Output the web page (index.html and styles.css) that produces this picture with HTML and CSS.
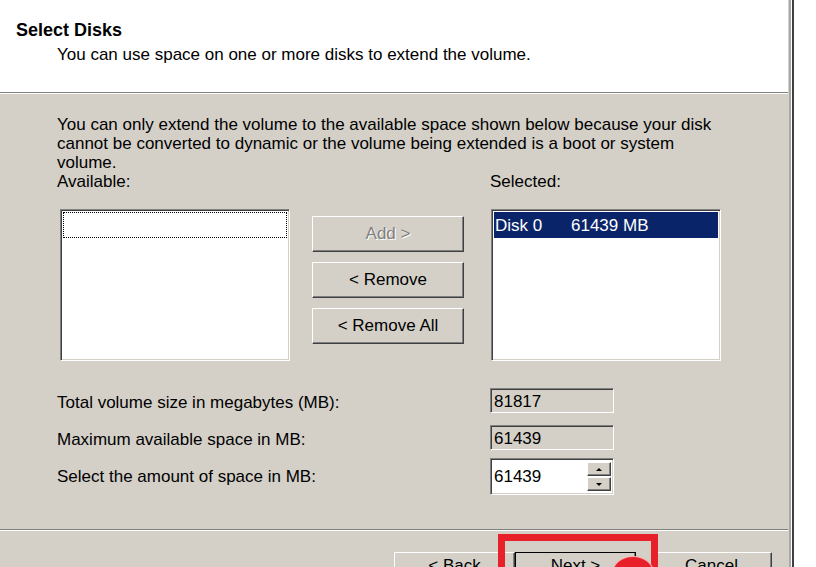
FILE: index.html
```html
<!DOCTYPE html>
<html lang="en">
<head>
  <meta charset="UTF-8">
  <meta name="viewport" content="width=device-width, initial-scale=1.0">
  <title>Extend Volume Wizard</title>
  <link rel="stylesheet" href="styles.css">
</head>
<body>
  <div class="wizard">
    <!-- Header -->
    <div class="header">
      <h1>Select Disks</h1>
      <p class="subtitle">You can use space on one or more disks to extend the volume.</p>
    </div>

    <!-- Page content -->
    <div class="content">
      <p class="note">You can only extend the volume to the available space shown below because your disk cannot be converted to dynamic or the volume being extended is a boot or system volume.</p>

      <div class="disk-picker">
        <label class="list-label">Available:</label>
        <span></span>
        <label class="list-label selected-label">Selected:</label>

        <div class="listbox available">
          <div class="focus-row"></div>
        </div>

        <div class="move-buttons">
          <button class="btn" disabled>Add &gt;</button>
          <button class="btn">&lt; Remove</button>
          <button class="btn">&lt; Remove All</button>
        </div>

        <div class="listbox selected">
          <div class="row-selected">
            <span class="disk-name">Disk 0</span>
            <span>61439 MB</span>
          </div>
        </div>
      </div>

      <div class="sizes">
        <label>Total volume size in megabytes (MB):</label>
        <div class="field readonly">81817</div>

        <label>Maximum available space in MB:</label>
        <div class="field readonly">61439</div>

        <label class="spin-label">Select the amount of space in MB:</label>
        <div class="field spin">
          <span class="spin-value">61439</span>
          <span class="spin-buttons">
            <span class="spin-btn"><span class="arrow-up"></span></span>
            <span class="spin-btn"><span class="arrow-down"></span></span>
          </span>
        </div>
      </div>
    </div>

    <!-- Footer buttons -->
    <div class="footer">
      <button class="btn nav">&lt; Back</button>
      <button class="btn nav default">Next &gt;</button>
      <button class="btn nav cancel">Cancel</button>
    </div>

    <!-- Annotation drawn over the screenshot -->
    <div class="mark-frame"></div>
    <div class="mark-blob"></div>
  </div>
</body>
</html>
```

FILE: styles.css
```css
/* Global Styles */
* {
  margin: 0;
  padding: 0;
  box-sizing: border-box;
}
body {
  font-family: 'Liberation Sans', Arial, sans-serif;
  font-size: 17px;
  line-height: 19px;
  color: #000;
  background: #fff;
}

/* Wizard frame */
.wizard {
  position: relative;
  width: 794px;
  height: 567px;
  overflow: hidden;
  display: flex;
  flex-direction: column;
  background: #d4d0c8;
  border-right: 2px solid #404040;
  box-shadow: inset -1px 0 #fff, inset -3px 0 #a8a8a8;
}

/* Header */
.header {
  height: 93px;
  background: #fff;
  border-bottom: 1px solid #808080;
  margin-right: 4px;
  padding: 21px 0 0 16px;
}
.header h1 {
  font-size: 18px;
  font-weight: bold;
  line-height: 19px;
}
.header .subtitle {
  margin-top: 5px;
  padding-left: 41px;
}

/* Content */
.content {
  flex: 1;
  border-top: 1px solid #fff;
  margin-right: 4px;
  padding: 21px 0 0 57px;
}
.note {
  width: 672px;
}
.disk-picker {
  display: grid;
  grid-template-columns: 233px 201px 230px;
  grid-template-rows: 19px 152px;
  row-gap: 18px;
}
.selected-label {
  margin-left: -1px;
}
.listbox {
  background: #fff;
  border: 1px solid;
  border-color: #808080 #fff #fff #808080;
  box-shadow: inset 1px 1px #404040, inset -1px -1px #d4d0c8;
  padding: 2px;
}
.listbox.available {
  margin-left: 3px;
}
.focus-row {
  height: 26px;
  border: 1px dotted #000;
}
.row-selected {
  display: flex;
  height: 26px;
  align-items: center;
  background: #0a246a;
  color: #fff;
  padding-left: 1px;
}
.disk-name {
  width: 76px;
}
.move-buttons {
  display: flex;
  flex-direction: column;
  gap: 10px;
  padding: 7px 0 0 22px;
}

/* Buttons */
.btn {
  font-family: inherit;
  font-size: 17px;
  width: 152px;
  height: 36px;
  background: #d4d0c8;
  color: #000;
  border: 1px solid;
  border-color: #fff #404040 #404040 #fff;
  box-shadow: inset -1px -1px #808080;
}
.btn:disabled {
  color: #808080;
  text-shadow: 1px 1px #fff;
}

/* Size fields */
.sizes {
  display: grid;
  grid-template-columns: 433px 124px;
  grid-template-rows: 25px 25px 37px;
  row-gap: 12px;
  margin-top: 27px;
  align-items: center;
}
.sizes label {
  margin-top: 3px;
}
.sizes .spin-label {
  margin: 0 0 9px;
}
.field {
  height: 100%;
  border: 1px solid;
  border-color: #808080 #fff #fff #808080;
  box-shadow: inset 1px 1px #404040, inset -1px -1px #d4d0c8;
  padding: 3px 0 0 3px;
}
.field.spin {
  display: flex;
  background: #fff;
  padding: 0;
  height: 37px;
  margin-top: -8px;
}
.spin-value {
  flex: 1;
  padding: 8px 0 0 3px;
}
.spin-buttons {
  display: flex;
  flex-direction: column;
  padding: 3px 2px 3px 0;
  gap: 1px;
}
.spin-btn {
  width: 24px;
  flex: 1;
  display: flex;
  align-items: center;
  justify-content: center;
  background: #d4d0c8;
  border: 1px solid;
  border-color: #fff #404040 #404040 #fff;
  box-shadow: inset -1px -1px #808080;
}
.arrow-up {
  border: 3px solid transparent;
  border-bottom: 3px solid #000;
  margin-top: -3px;
}
.arrow-down {
  border: 3px solid transparent;
  border-top: 3px solid #000;
  margin-bottom: -3px;
}

/* Footer */
.footer {
  height: 38px;
  border-top: 1px solid #808080;
  box-shadow: inset 0 1px #fff;
  margin-right: 4px;
  display: flex;
  padding: 22px 0 0 394px;
}
.btn.nav {
  width: 121px;
  height: 28px;
  flex-shrink: 0;
}
.btn.default {
  outline: 1px solid #000;
  outline-offset: -1px;
}
.btn.cancel {
  margin-left: 15px;
}

/* Red annotation */
.mark-frame {
  position: absolute;
  left: 498px;
  top: 534px;
  width: 160px;
  height: 60px;
  border: 7px solid #e8202a;
}
.mark-blob {
  position: absolute;
  left: 613px;
  top: 557px;
  width: 40px;
  height: 32px;
  border-radius: 50%;
  background: #e8202a;
  box-shadow: 0 0 0 1px #f6b0b0;
}
```
